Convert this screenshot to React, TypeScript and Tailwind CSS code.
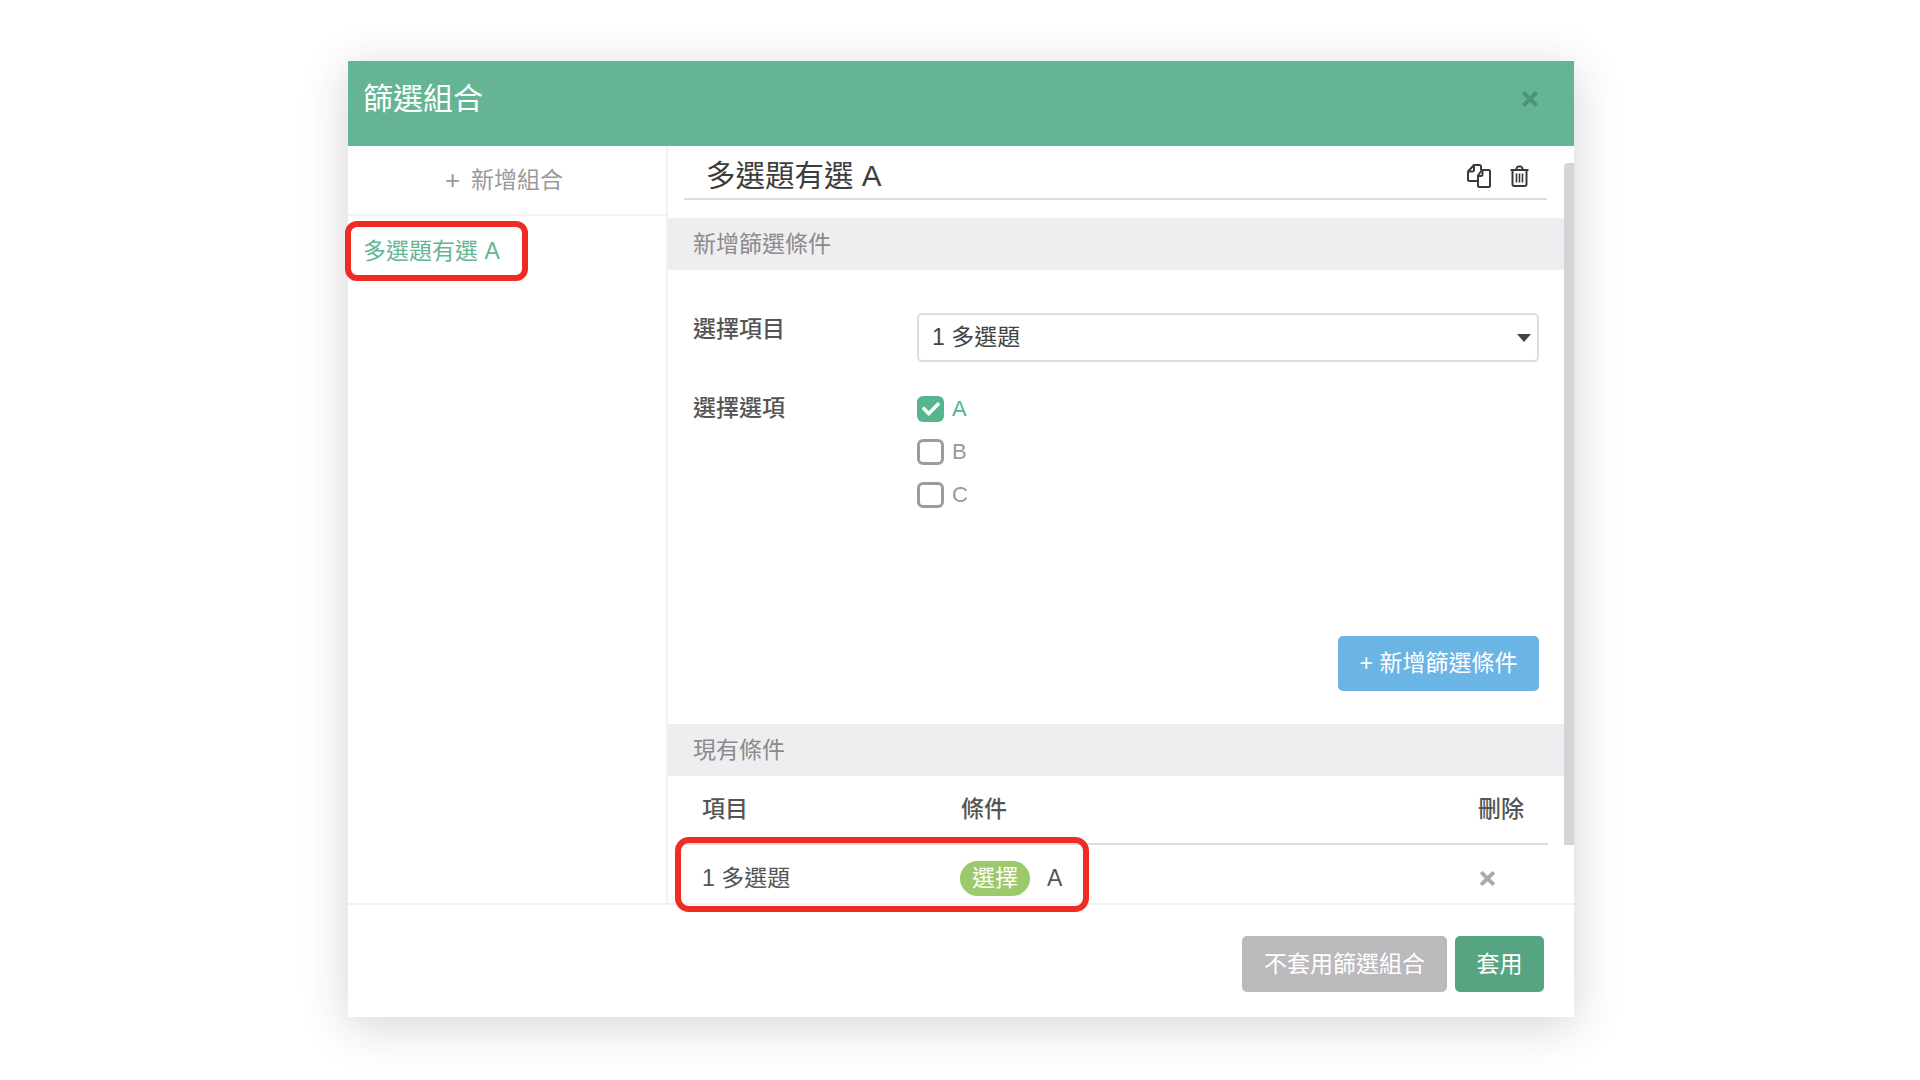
import { FaCheck, FaTimes } from "react-icons/fa";

function CopyIcon() {
  return (
    <svg width="24" height="24" viewBox="0 0 24 24" fill="none" stroke="#3a3a3a" strokeWidth="2" strokeLinejoin="round">
      <path d="M11 17H2.5a1.5 1.5 0 0 1-1.5-1.5V7.5L7 1h5.5A1.5 1.5 0 0 1 14 2.500V6" />
      <path d="M7 1v5a1.500 1.500 0 0 1-1.500 1.500H1" />
      <path fill="#fff" d="M15 6h6.500A1.500 1.500 0 0 1 23 7.500v14a1.500 1.500 0 0 1-1.500 1.500h-9a1.500 1.500 0 0 1-1.500-1.500V11.500z" />
      <path d="M15.500 6v4.500a1.500 1.500 0 0 1-1.500 1.500h-3" />
    </svg>
  );
}

function TrashIcon() {
  return (
    <svg width="19" height="22" viewBox="0 0 19 22" fill="none" stroke="#3a3a3a" strokeWidth="2" strokeLinejoin="round">
      <path d="M0.500 5h18" />
      <path d="M6 5l1-2.600A1.500 1.500 0 0 1 8.400 1.500h2.200A1.500 1.500 0 0 1 12 2.400L13 5" />
      <path d="M2.500 5v14a2 2 0 0 0 2 2h10a2 2 0 0 0 2-2V5" />
      <path d="M6.500 8.500v9M9.500 8.500v9M12.500 8.500v9" strokeWidth="1.600" />
    </svg>
  );
}

function Option({ label, checked }: { label: string; checked?: boolean }) {
  return (
    <label className="flex h-[26px] items-center gap-[8px]">
      {checked ? (
        <span className="flex h-[26px] w-[27px] items-center justify-center rounded-[6px] bg-[#57b58d] text-white">
          <FaCheck size={18} />
        </span>
      ) : (
        <span className="h-[26px] w-[27px] rounded-[6px] border-[3px] border-[#9c9c9c] bg-white" />
      )}
      <span className={`text-[22px] leading-none ${checked ? "text-[#57b58d]" : "text-[#9a9a9a]"}`}>
        {label}
      </span>
    </label>
  );
}

export default function App() {
  return (
    <div className="min-h-[1080px] overflow-hidden bg-white pl-[348px] pt-[61px] [font-family:'Liberation_Sans','Noto_Sans_CJK_TC',sans-serif]">
      <div className="relative flex h-[956px] w-[1226px] flex-col bg-white shadow-[0_8px_44px_rgba(40,35,50,0.2)]">
        <header className="flex h-[85px] shrink-0 items-center justify-between bg-[#65b594] pl-[15px] pr-[33px]">
          <h1 className="mb-[9px] text-[30px] font-normal leading-none text-white">篩選組合</h1>
          <FaTimes size={22} className="mb-[9px] text-[#4a9477]" />
        </header>

        <div className="flex h-[757px] shrink-0">
          <aside className="w-[320px] shrink-0 border-r-2 border-[#f1f0f3]">
            <div className="flex h-[70px] items-center justify-center gap-[11px] border-b-2 border-[#f3f2f5] pr-[6px] text-[23px] leading-none text-[#999]">
              <span className="text-[26px]">+</span>
              <span>新增組合</span>
            </div>
            <div className="pl-[15px] pt-[23px] text-[23px] leading-[24px] text-[#65b594]">多選題有選 A</div>
          </aside>

          <main className="flex w-[896px] shrink-0 flex-col">
            <div className="ml-[16px] mr-[17px] flex h-[54px] shrink-0 items-center justify-between border-b-2 border-[#dddcdf] pl-[22px] pr-[18px] pt-[8px]">
              <h2 className="text-[29.5px] font-normal leading-none text-[#3d3d3d]">多選題有選 A</h2>
              <div className="flex items-center gap-[19px]">
                <CopyIcon />
                <TrashIcon />
              </div>
            </div>

            <div className="mt-[18px] flex h-[52px] shrink-0 items-center bg-[#eeedf0] pl-[25px] text-[23px] text-[#8b8b8b]">
              新增篩選條件
            </div>

            <section className="flex h-[454px] shrink-0 flex-col pb-[33px] pl-[25px] pr-[25px] pt-[43px]">
              <div className="flex">
                <div className="w-[224px] shrink-0 pt-[3px] text-[23px] font-medium leading-[26px] text-[#555]">選擇項目</div>
                <div className="flex h-[49px] w-[622px] items-center justify-between rounded-[5px] border-2 border-[#dddcdf] pl-[13px] pr-[6px] text-[23px] leading-none text-[#444]">
                  <span>1 多選題</span>
                  <svg width="14" height="8" viewBox="0 0 14 8">
                    <polygon points="0,0 14,0 7,8" fill="#444" />
                  </svg>
                </div>
              </div>
              <div className="mt-[22px] flex">
                <div className="w-[224px] shrink-0 pt-[11px] text-[23px] font-medium leading-[26px] text-[#555]">選擇選項</div>
                <div className="flex flex-col gap-[17px] pt-[12px]">
                  <Option label="A" checked />
                  <Option label="B" />
                  <Option label="C" />
                </div>
              </div>
              <button
                type="button"
                className="ml-auto mt-auto h-[55px] w-[201px] rounded-[5px] bg-[#6bb5e5] text-[23px] leading-none text-white"
              >
                + 新增篩選條件
              </button>
            </section>

            <div className="flex h-[52px] shrink-0 items-center bg-[#eeedf0] pl-[25px] text-[23px] text-[#8b8b8b]">
              現有條件
            </div>

            <div className="ml-[16px] mr-[16px]">
              <div className="grid h-[69px] grid-cols-[259px_1fr_70px] items-center border-b-2 border-[#dddcdf] pl-[18px] text-[23px] font-medium leading-none text-[#555]">
                <span>項目</span>
                <span>條件</span>
                <span>刪除</span>
              </div>
              <div className="grid h-[58px] grid-cols-[258px_1fr_71px] items-center pl-[18px] pt-[8px] text-[23px] leading-none text-[#555]">
                <span>1 多選題</span>
                <span className="flex items-center gap-[17px]">
                  <span className="flex h-[35px] w-[70px] items-center justify-center rounded-full bg-[#9bc96b] text-white">選擇</span>
                  <span>A</span>
                </span>
                <FaTimes size={21} className="text-[#aaa]" />
              </div>
            </div>
          </main>
        </div>

        <footer className="flex flex-1 items-start justify-end gap-[8px] border-t-2 border-[#f1f0f3] pr-[30px] pt-[31px]">
          <button type="button" className="h-[56px] w-[205px] rounded-[5px] bg-[#bbb9bc] text-[23px] leading-none text-white">
            不套用篩選組合
          </button>
          <button type="button" className="h-[56px] w-[89px] rounded-[5px] bg-[#57a482] text-[23px] leading-none text-white">
            套用
          </button>
        </footer>

        {/* scrollbar and the two red callouts sit over the dialog */}
        <div className="absolute right-0 top-[102px] h-[682px] w-[10px] rounded-tl-[4px] bg-[#d5d4d8]" />
        <div className="absolute left-[-3px] top-[160px] h-[60px] w-[183px] rounded-[12px] border-[6px] border-[#ee2b24]" />
        <div className="absolute left-[327px] top-[776px] h-[75px] w-[414px] rounded-[14px] border-[6px] border-[#ee2b24]" />
      </div>
    </div>
  );
}
